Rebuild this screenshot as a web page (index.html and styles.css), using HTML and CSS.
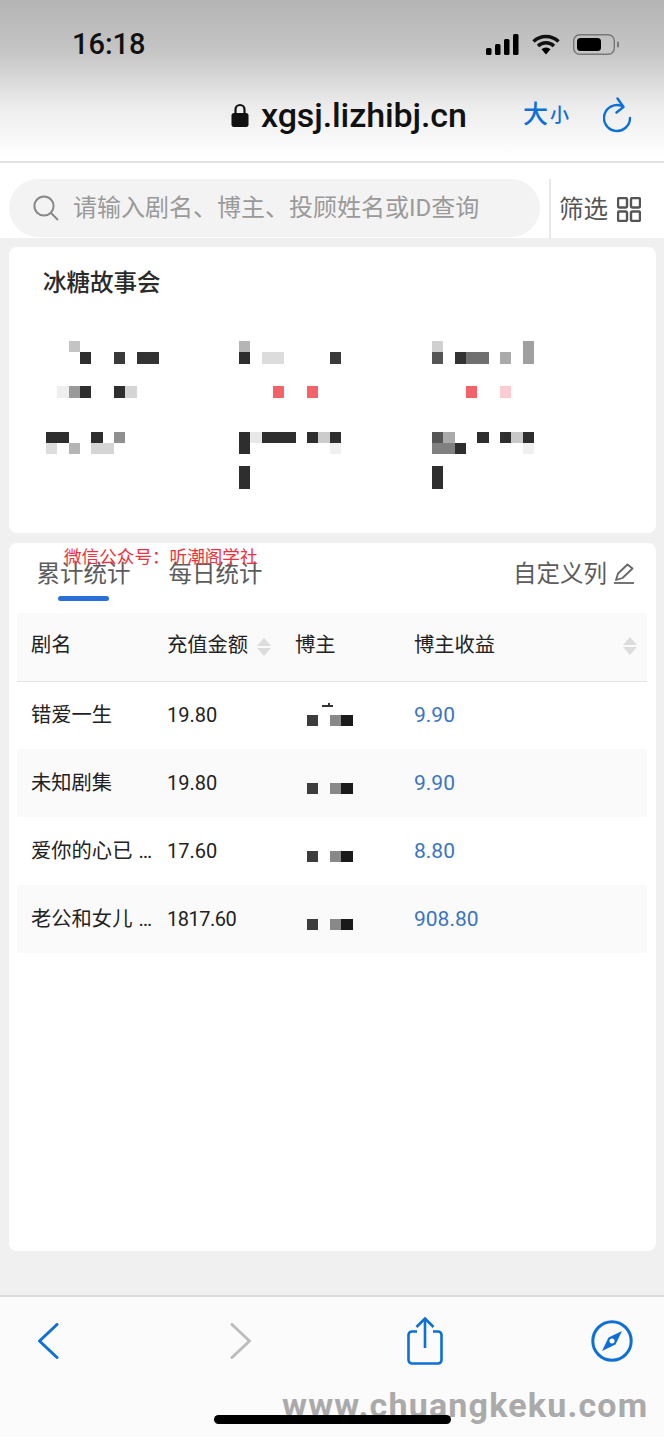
FILE: index.html
```html
<!DOCTYPE html>
<html lang="en">
<head>
  <meta charset="UTF-8">
  <meta name="viewport" content="width=device-width, initial-scale=1.0">
  <title>xgsj.lizhibj.cn</title>
  <link rel="stylesheet" href="styles.css">
</head>
<body>
  <header class="topbar">
    <div class="status-row">
      <span class="time">16:18</span>
      <div class="status-icons">
        <svg width="33" height="21" viewBox="0 0 33 21"><rect x="0" y="14" width="5.5" height="7" rx="1.5"/><rect x="9" y="10" width="5.5" height="11" rx="1.5"/><rect x="18" y="5" width="5.5" height="16" rx="1.5"/><rect x="27" y="0" width="5.5" height="21" rx="1.5"/></svg>
        <svg width="28" height="21" viewBox="0 0 28 21"><path d="M1.5 7.500a18 18 0 0 1 25 0M6 12a11.500 11.500 0 0 1 16 0" fill="none" stroke="#111" stroke-width="3.400"/><path d="M9.500 15.200a6.500 6.500 0 0 1 9 0L14 20.500z"/></svg>
        <svg width="46" height="21" viewBox="0 0 46 21"><rect x="0.700" y="0.700" width="40.600" height="19.600" rx="6" fill="none" stroke="#777" stroke-width="1.400"/><rect x="4" y="4" width="24" height="13" rx="3.500"/><rect x="44" y="7.500" width="2" height="6" rx="1" fill="#777"/></svg>
      </div>
    </div>
    <div class="address-row">
      <svg class="lock" width="18" height="24" viewBox="0 0 18 24"><path d="M4.500 11V6.500a4.500 4.500 0 0 1 9 0V11" fill="none" stroke="#111" stroke-width="2.200"/><rect x="0.500" y="10" width="17" height="14" rx="2.500" fill="#111"/></svg>
      <span class="url">xgsj.lizhibj.cn</span>
      <span class="text-size"><span class="big">大</span><span class="small">小</span></span>
      <svg class="reload" width="30" height="36" viewBox="0 0 30 36"><path d="M19 9A13 13 0 1 0 27 21" fill="none" stroke="#0d6fd8" stroke-width="2.400" stroke-linecap="round"/><path d="M14.500 1.500l6 8.500-7 5.500" fill="none" stroke="#0d6fd8" stroke-width="2.400" stroke-linecap="round" stroke-linejoin="round"/></svg>
    </div>
  </header>

  <div class="search-row">
    <div class="search-box">
      <svg width="26" height="26" viewBox="0 0 26 26"><circle cx="11" cy="11" r="9.600" fill="none" stroke="#888" stroke-width="2"/><path d="M18 18l7 7" stroke="#888" stroke-width="2"/></svg>
      <span class="placeholder">请输入剧名、博主、投顾姓名或ID查询</span>
    </div>
    <div class="filter">
      <span>筛选</span>
      <svg width="24" height="25" viewBox="0 0 24 25"><rect x="1" y="1" width="9" height="9.500" rx="1.500"/><rect x="14" y="1" width="9" height="9.500" rx="1.500"/><rect x="1" y="14.500" width="9" height="9.500" rx="1.500"/><rect x="14" y="14.500" width="9" height="9.500" rx="1.500"/></svg>
    </div>
  </div>

  <main class="content">
    <section class="card summary">
      <h2 class="summary-title">冰糖故事会</h2>
      <div class="summary-grid">
        <svg class="mosaic" viewBox="0 0 10 13" shape-rendering="crispEdges">
          <rect x="2" y="0" width="1" height="1" fill="#c4c4c4"/>
          <rect x="3" y="1" width="1" height="1" fill="#2e2e2e"/><rect x="6" y="1" width="1" height="1" fill="#3a3a3a"/><rect x="8" y="1" width="2" height="1" fill="#333"/>
          <rect x="1" y="4" width="1" height="1" fill="#efefef"/><rect x="2" y="4" width="1" height="1" fill="#999"/><rect x="3" y="4" width="1" height="1" fill="#2e2e2e"/><rect x="6" y="4" width="1" height="1" fill="#2e2e2e"/><rect x="7" y="4" width="1" height="1" fill="#d5d5d5"/>
          <rect x="0" y="8" width="2" height="1" fill="#2e2e2e"/><rect x="4" y="8" width="1" height="1" fill="#2e2e2e"/><rect x="6" y="8" width="1" height="1" fill="#909090"/>
          <rect x="0" y="9" width="1" height="1" fill="#ddd"/><rect x="2" y="9" width="1" height="1" fill="#b5b5b5"/><rect x="4" y="9" width="2" height="1" fill="#d5d5d5"/>
        </svg>
        <svg class="mosaic" viewBox="0 0 10 13" shape-rendering="crispEdges">
          <rect x="0" y="0" width="1" height="1" fill="#b5b5b5"/>
          <rect x="0" y="1" width="1" height="1" fill="#2e2e2e"/><rect x="2" y="1" width="2" height="1" fill="#dcdcdc"/><rect x="8" y="1" width="1" height="1" fill="#3a3a3a"/>
          <rect x="3" y="4" width="1" height="1" fill="#f2626b"/><rect x="6" y="4" width="1" height="1" fill="#f2626b"/>
          <rect x="0" y="8" width="1" height="2" fill="#2e2e2e"/><rect x="1" y="8" width="1" height="1" fill="#e8e8e8"/><rect x="2" y="8" width="3" height="1" fill="#2e2e2e"/><rect x="6" y="8" width="1" height="1" fill="#2e2e2e"/><rect x="7" y="8" width="1" height="1" fill="#ccc"/><rect x="8" y="8" width="1" height="1" fill="#2e2e2e"/>
          <rect x="8" y="9" width="1" height="1" fill="#f0f0f0"/>
          <rect x="0" y="11" width="1" height="2" fill="#2e2e2e"/>
        </svg>
        <svg class="mosaic" viewBox="0 0 10 13" shape-rendering="crispEdges">
          <rect x="0" y="0" width="1" height="1" fill="#d0d0d0"/><rect x="8" y="0" width="1" height="2" fill="#a0a0a0"/>
          <rect x="0" y="1" width="1" height="1" fill="#555"/><rect x="2" y="1" width="1" height="1" fill="#333"/><rect x="3" y="1" width="2" height="1" fill="#707070"/><rect x="6" y="1" width="1" height="1" fill="#aaa"/>
          <rect x="3" y="4" width="1" height="1" fill="#f2626b"/><rect x="6" y="4" width="1" height="1" fill="#fbcdd2"/>
          <rect x="0" y="8" width="1" height="1" fill="#555"/><rect x="1" y="8" width="1" height="1" fill="#aaa"/><rect x="4" y="8" width="1" height="1" fill="#2e2e2e"/><rect x="6" y="8" width="1" height="1" fill="#2e2e2e"/><rect x="7" y="8" width="1" height="1" fill="#c8c8c8"/><rect x="8" y="8" width="1" height="1" fill="#2e2e2e"/>
          <rect x="0" y="9" width="2" height="1" fill="#808080"/><rect x="2" y="9" width="1" height="1" fill="#2e2e2e"/><rect x="8" y="9" width="1" height="1" fill="#f0f0f0"/>
          <rect x="0" y="11" width="1" height="2" fill="#2e2e2e"/>
        </svg>
      </div>
    </section>

    <section class="card stats">
      <span class="stamp">微信公众号：听潮阁学社</span>
      <div class="tabs">
        <div class="tab tab-active">累计统计<i class="tab-line"></i></div>
        <div class="tab">每日统计</div>
        <div class="custom-cols">
          <span>自定义列</span>
          <svg width="22" height="22" viewBox="0 0 22 22"><path d="M3 17l2-6.500L14.500 1.500l5 4L9.500 15z" fill="none" stroke="#666" stroke-width="1.800" stroke-linejoin="round"/><path d="M1 20h20" stroke="#666" stroke-width="1.800"/></svg>
        </div>
      </div>

      <table class="data-table">
        <thead>
          <tr>
            <th class="col-name">剧名</th>
            <th class="col-amount">充值金额<span class="sort"><b class="up"></b><b class="down"></b></span></th>
            <th class="col-blogger">博主</th>
            <th class="col-income">博主收益<span class="sort sort-end"><b class="up"></b><b class="down"></b></span></th>
          </tr>
        </thead>
        <tbody>
          <tr>
            <td>错爱一生</td>
            <td class="num">19.80</td>
            <td><svg class="blur-name" viewBox="0 0 46 24" shape-rendering="crispEdges"><rect x="15" y="3" width="11" height="1.500" fill="#333"/><rect x="21" y="1" width="1.500" height="4" fill="#333"/><rect x="0" y="13" width="11" height="11" fill="#3c3c3c"/><rect x="23" y="13" width="11" height="11" fill="#888"/><rect x="34" y="13" width="12" height="11" fill="#1a1a1a"/></svg></td>
            <td class="income">9.90</td>
          </tr>
          <tr>
            <td>未知剧集</td>
            <td class="num">19.80</td>
            <td><svg class="blur-name" viewBox="0 0 46 24" shape-rendering="crispEdges"><rect x="0" y="13" width="11" height="11" fill="#3c3c3c"/><rect x="23" y="13" width="11" height="11" fill="#888"/><rect x="34" y="13" width="12" height="11" fill="#1a1a1a"/></svg></td>
            <td class="income">9.90</td>
          </tr>
          <tr>
            <td>爱你的心已<span class="dots">…</span></td>
            <td class="num">17.60</td>
            <td><svg class="blur-name" viewBox="0 0 46 24" shape-rendering="crispEdges"><rect x="0" y="13" width="11" height="11" fill="#3c3c3c"/><rect x="23" y="13" width="11" height="11" fill="#888"/><rect x="34" y="13" width="12" height="11" fill="#1a1a1a"/></svg></td>
            <td class="income">8.80</td>
          </tr>
          <tr>
            <td>老公和女儿<span class="dots">…</span></td>
            <td class="num tight">1817.60</td>
            <td><svg class="blur-name" viewBox="0 0 46 24" shape-rendering="crispEdges"><rect x="0" y="13" width="11" height="11" fill="#3c3c3c"/><rect x="23" y="13" width="11" height="11" fill="#888"/><rect x="34" y="13" width="12" height="11" fill="#1a1a1a"/></svg></td>
            <td class="income">908.80</td>
          </tr>
        </tbody>
      </table>
    </section>
  </main>

  <footer class="toolbar">
    <div class="toolbar-icons">
      <svg width="22" height="36" viewBox="0 0 22 36"><path d="M20 1.500L2.500 18 20 34.500" fill="none" stroke="#0d6fd8" stroke-width="3" stroke-linecap="round" stroke-linejoin="round"/></svg>
      <svg width="22" height="36" viewBox="0 0 22 36"><path d="M2 1.500L19.500 18 2 34.500" fill="none" stroke="#bdbdbd" stroke-width="3" stroke-linecap="round" stroke-linejoin="round"/></svg>
      <svg width="36" height="48" viewBox="0 0 36 48"><path d="M10 14.500H5a3.500 3.500 0 0 0-3.500 3.500v25A3.500 3.500 0 0 0 5 46.500h26a3.500 3.500 0 0 0 3.500-3.500V18a3.500 3.500 0 0 0-3.500-3.500h-5" fill="none" stroke="#0d6fd8" stroke-width="2.600"/><path d="M18 31V2M9.500 10L18 1.500 26.500 10" fill="none" stroke="#0d6fd8" stroke-width="2.600"/></svg>
      <svg width="42" height="42" viewBox="0 0 42 42"><circle cx="21" cy="21" r="19.200" fill="none" stroke="#0d6fd8" stroke-width="3"/><path d="M31 11L17.500 17.500 11 31l13.500-6.500z" fill="#0d6fd8"/><circle cx="21" cy="21" r="2.500" fill="#fff"/></svg>
    </div>
    <span class="site-mark">www.chuangkeku.com</span>
    <i class="home-bar"></i>
  </footer>
</body>
</html>
```

FILE: styles.css
```css
* {
  box-sizing: border-box;
}
html, body {
  margin: 0;
  padding: 0;
}
body {
  width: 664px;
  height: 1437px;
  overflow: hidden;
  display: flex;
  flex-direction: column;
  background-color: #f0f0f0;
  font-family: Roboto, "Noto Sans CJK SC", sans-serif;
  color: #222;
}

/* browser chrome */
.topbar {
  height: 163px;
  flex: none;
  background: linear-gradient(#b4b4b4, #c6c6c6 33%, #ececec 66%, #fff 98%);
  border-bottom: 2px solid #e2e2e2;
}
.status-row {
  height: 88px;
  display: flex;
  align-items: center;
  justify-content: space-between;
  padding: 0 45px 0 72px;
}
.time {
  font-size: 29px;
  font-weight: 500;
  color: #111;
}
.status-icons {
  display: flex;
  align-items: center;
  gap: 13px;
}
.address-row {
  display: flex;
  align-items: center;
  height: 54px;
  padding-left: 231px;
}
.url {
  margin-left: 12px;
  width: 204px;
  font-size: 34px;
  font-weight: 500;
  letter-spacing: -0.100px;
  color: #111;
  white-space: nowrap;
}
.text-size {
  margin-left: 58px;
  width: 48px;
  color: #0d6fd8;
  display: flex;
  align-items: flex-end;
  font-weight: 500;
}
.big {
  font-size: 25px;
  line-height: 30px;
}
.small {
  font-size: 19px;
  line-height: 28px;
  margin-left: 2px;
}
.reload {
  margin-left: 32px;
}

/* search */
.search-row {
  height: 75px;
  flex: none;
  display: flex;
  background-color: #fff;
  padding: 16px 0 1px 9px;
}
.search-box {
  width: 531px;
  height: 58px;
  display: flex;
  align-items: center;
  gap: 14px;
  padding-left: 24px;
  border-radius: 29px;
  background-color: #f3f3f3;
}
.placeholder {
  font-size: 24px;
  line-height: 28px;
  margin-bottom: 1px;
  color: #9a9a9a;
  white-space: nowrap;
}
.filter {
  height: 60px;
  margin-left: 9px;
  padding-left: 8px;
  display: flex;
  align-items: center;
  gap: 9px;
  border-left: 2px solid #e8e8e8;
  font-size: 24.500px;
  color: #555;
}
.filter span {
  margin-bottom: 3px;
}
.filter rect {
  fill: none;
  stroke: #555;
  stroke-width: 2.400;
}

/* cards */
.content {
  flex: 1;
  padding: 9px 8px 0 9px;
  display: flex;
  flex-direction: column;
  gap: 10px;
}
.card {
  background-color: #fff;
  border-radius: 8px;
}
.summary {
  height: 286px;
  padding: 20px 0 0 34px;
}
.summary-title {
  margin: 0;
  font-size: 23.500px;
  line-height: 32px;
  font-weight: 500;
  color: #2a2a2a;
}
.summary-grid {
  margin-top: 42px;
  margin-left: 2.500px;
  display: grid;
  grid-template-columns: repeat(3, 193px);
}
.mosaic {
  width: 113.500px;
  height: 147.500px;
  display: block;
}

.stats {
  height: 708px;
  position: relative;
  padding: 0 8px;
}
.stamp {
  position: absolute;
  left: 55px;
  top: 2px;
  font-size: 17.600px;
  line-height: 24px;
  color: #f2303c;
  white-space: nowrap;
}
.tabs {
  height: 70px;
  display: flex;
  padding: 15px 13px 0 19.500px;
  gap: 38px;
  font-size: 23.500px;
  line-height: 32px;
  color: #5c5c5c;
}
.tab {
  display: flex;
  flex-direction: column;
  align-items: center;
}
.tab-line {
  width: 51px;
  height: 5px;
  margin-top: 6px;
  border-radius: 3px;
  background-color: #2a6fd8;
}
.custom-cols {
  margin-left: auto;
  display: flex;
  align-items: flex-start;
  gap: 6px;
}
.custom-cols svg {
  margin-top: 5px;
}

/* table */
.data-table {
  width: 630px;
  table-layout: fixed;
  border-collapse: collapse;
  font-size: 20.300px;
  line-height: 28px;
  color: #222;
}
.data-table th {
  height: 68px;
  padding: 0 0 3px 14px;
  font-weight: 400;
  text-align: left;
  background-color: #fafafa;
  border-bottom: 1px solid #e4e4e4;
}
.data-table td {
  height: 68px;
  padding: 0 0 0 14px;
  white-space: nowrap;
}
.data-table tbody tr:nth-child(even) td {
  background-color: #fafafa;
}
.col-name {
  width: 136px;
}
.col-amount {
  width: 128px;
}
.col-blogger {
  width: 119px;
}
.col-income {
  position: relative;
}
.dots {
  margin-left: 6px;
}
.num {
  font-size: 20px;
}
.tight {
  letter-spacing: -0.500px;
}
.income {
  font-size: 21px;
  color: #3a75c4;
}
.blur-name {
  display: block;
  width: 46px;
  height: 24px;
  margin-left: 12px;
  margin-bottom: 2px;
}
.sort {
  display: inline-flex;
  flex-direction: column;
  gap: 2px;
  margin-left: 9px;
  vertical-align: middle;
}
.sort-end {
  position: absolute;
  right: 10px;
  top: 24px;
}
.up {
  border: 7px solid transparent;
  border-top: 0;
  border-bottom: 8px solid #dcdcdc;
}
.down {
  border: 7px solid transparent;
  border-bottom: 0;
  border-top: 8px solid #dcdcdc;
}

/* bottom toolbar */
.toolbar {
  height: 142px;
  flex: none;
  position: relative;
  background-color: #fbfbfb;
  border-top: 2px solid #dcdcdc;
}
.toolbar-icons {
  display: grid;
  grid-template-columns: 193px 177px 184px 42px;
  padding: 20px 0 0 37px;
  align-items: center;
}
.site-mark {
  position: absolute;
  left: 282px;
  top: 88px;
  font-weight: 700;
  font-size: 34px;
  letter-spacing: 1.200px;
  line-height: 40px;
  color: #aaa;
  white-space: nowrap;
}
.home-bar {
  position: absolute;
  left: 214px;
  top: 118px;
  width: 237px;
  height: 9px;
  border-radius: 5px;
  background-color: #000;
}
```
